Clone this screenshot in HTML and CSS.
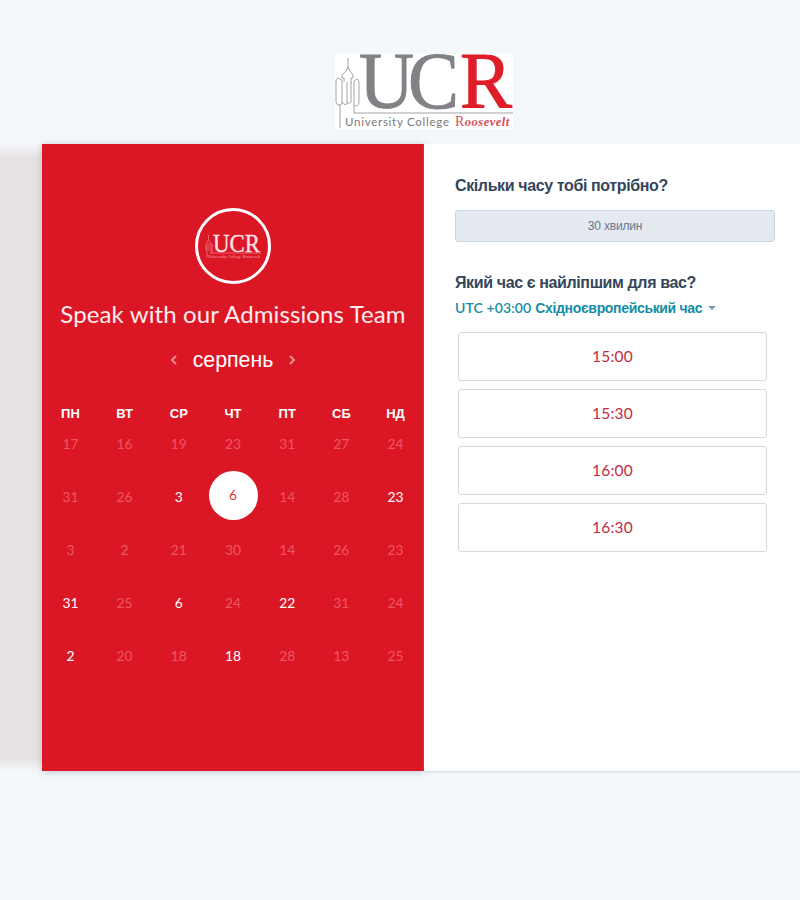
FILE: index.html
```html
<!DOCTYPE html>
<html lang="uk">
<head>
<meta charset="utf-8">
<title>University College Roosevelt</title>
<link rel="stylesheet" href="styles.css">
</head>
<body>
<header class="brand">
<svg class="logo" viewBox="0 0 178 75" role="img" aria-label="University College Roosevelt">
<rect width="178" height="75" fill="#fff"/>
<g class="tower"><path d="M13 4v9M13 13q-1 4-6 8v3h2v4M13 13q1 4 5 8v3h-2v5M19 27v32h159M5 51v23"/><path d="M5 25q-3-2-4 1v22q1 4 4 3q2 0 2-3V28q0-3-2-3zM7 48q3 4 5 2V28M12 48q3 3 4 0V28M19 27q4-4 5 1v20q-1 6-5 3"/></g>
<g class="letters"><text x="24" y="54" textLength="55" lengthAdjust="spacingAndGlyphs">U</text><text x="73" y="54" textLength="51" lengthAdjust="spacingAndGlyphs">C</text><text class="roman" x="125" y="54" textLength="52" lengthAdjust="spacingAndGlyphs">R</text></g>
<text class="college" x="10" y="72" textLength="104">University College</text>
<text class="roosevelt" x="120" y="72"><tspan class="initial">R</tspan>oosevelt</text>
</svg>
</header>
<main class="scheduler">
<div class="gutter"></div>
<section class="calendar">
<div class="avatar">
<svg viewBox="0 0 56 25" role="img" aria-label="UCR">
<path class="mini-tower" d="M3.500 1v5L2 8v12M3.500 6L6 9v11M1 10v7M4 9v8M7 10v9h49M2 20v4"/>
<text class="mini" x="8" y="18" textLength="47" lengthAdjust="spacingAndGlyphs">UCR</text>
<text class="mini-name" x="3" y="23.500" textLength="52" lengthAdjust="spacingAndGlyphs">University College Roosevelt</text>
</svg>
</div>
<h1>Speak with our Admissions Team</h1>
<div class="month">
<svg class="arrow" viewBox="0 0 8 10"><path d="M6 1L2 5l4 4"/></svg>
<span>серпень</span>
<svg class="arrow" viewBox="0 0 8 10"><path d="M2 1l4 4-4 4"/></svg>
</div>
<div class="week names"><span>ПН</span><span>ВТ</span><span>СР</span><span>ЧТ</span><span>ПТ</span><span>СБ</span><span>НД</span></div>
<div class="week"><span>17</span><span>16</span><span>19</span><span>23</span><span>31</span><span>27</span><span>24</span></div>
<div class="week"><span>31</span><span>26</span><span class="open">3</span><span class="selected">6</span><span>14</span><span>28</span><span class="open">23</span></div>
<div class="week"><span>3</span><span>2</span><span>21</span><span>30</span><span>14</span><span>26</span><span>23</span></div>
<div class="week"><span class="open">31</span><span>25</span><span class="open">6</span><span>24</span><span class="open">22</span><span>31</span><span>24</span></div>
<div class="week"><span class="open">2</span><span>20</span><span>18</span><span class="open">18</span><span>28</span><span>13</span><span>25</span></div>
</section>
<section class="booking">
<h2>Скільки часу тобі потрібно?</h2>
<div class="duration">30 хвилин</div>
<h2>Який час є найліпшим для вас?</h2>
<div class="zone"><span class="offset">UTC +03:00</span><span class="place">Східноєвропейський час</span><i class="caret"></i></div>
<div class="slots"><div class="slot">15:00</div><div class="slot">15:30</div><div class="slot">16:00</div><div class="slot">16:30</div></div>
</section>
</main>
</body>
</html>
```
FILE: styles.css
```css
* { box-sizing: border-box; }
body { margin: 0; height: 900px; overflow: hidden; background: #f4f8fb; font-family: "Liberation Sans", sans-serif; }
.brand { height: 144px; padding: 54px 0 0 335px; }
.logo { display: block; width: 178px; height: 75px; overflow: visible; }
.tower { fill: none; stroke: #99999c; stroke-width: .9; }
.letters { font: 81px "Liberation Serif", serif; fill: #808286; stroke: #808286; stroke-width: .9; }
.letters .roman { fill: #df1d29; stroke: #df1d29; stroke-width: 1; }
.college { font: 11.500px Lato, sans-serif; fill: #77777b; }
.roosevelt { font: italic bold 12.500px "Liberation Serif", serif; letter-spacing: .5px; fill: #d94c57; }
.initial { font-style: normal; font-weight: normal; font-size: 14px; }
.scheduler { display: flex; height: 627px; }
.gutter { width: 42px; background: linear-gradient(#f4f8fb, #e6e2e2 14px, #e6e2e2 615px, #f4f8fb); }
.calendar { width: 382px; background: #dc1725; box-shadow: 0 1px 7px #8b95a180; color: #fff; padding-top: 64px; font-family: Lato, sans-serif; }
.avatar { width: 76px; height: 76px; margin: 0 auto; border: 3px solid #fff; border-radius: 50%; display: flex; align-items: center; justify-content: center; }
.avatar svg { width: 56px; height: 25px; overflow: visible; }
.mini-tower { fill: none; stroke: #f4929a; stroke-width: .6; }
.mini { font: 26px "Liberation Serif", serif; fill: #ffe5e7; stroke: #ffe5e7; stroke-width: .3; }
.mini-name { font: 4.500px "Liberation Serif", serif; fill: #f5a5aa; }
h1 { margin: 12px 0 0; font-size: 24px; font-weight: 400; line-height: 36px; letter-spacing: .12px; text-align: center; white-space: nowrap; color: #ffecee; }
.month { display: flex; justify-content: center; align-items: center; gap: 15px; height: 28px; margin-top: 14px; font: 21.300px "Liberation Sans", sans-serif; }
.arrow { width: 8px; height: 10px; fill: none; stroke: #f18d94; stroke-width: 2; }
.week { display: grid; grid-template-columns: repeat(7, 54.200px); justify-content: center; align-items: center; justify-items: center; height: 53px; font-size: 13.800px; letter-spacing: 0; color: #ec5661; }
.names { height: 30px; margin-top: 24px; font: bold 13px "Liberation Sans", sans-serif; color: #fff; }
.names + .week { height: 32px; margin-bottom: 11px; margin-top: -1px; }
.week .open { color: #fff; }
.selected { width: 49px; height: 49px; line-height: 48px; margin-top: -2px; border-radius: 50%; background: #fff; color: #dc3945; text-align: center; }
.booking { width: 376px; background: #fff; padding: 31px 25px 0 31px; box-shadow: 0 1px 2px #a9b3bf80; }
h2 { margin: 0; font-size: 16px; line-height: 22px; letter-spacing: -.38px; color: #34455a; white-space: nowrap; }
.duration { height: 32px; margin: 13px 0 30px; border: 1px solid #cbd6e2; border-radius: 3px; background: #e5eaf0; color: #65788f; font-size: 12px; letter-spacing: -.2px; line-height: 30px; text-align: center; }
.zone { display: flex; align-items: center; height: 20px; margin-top: 4px; color: #168da4; white-space: nowrap; font-size: 14px; font-weight: bold; letter-spacing: -.33px; }
.offset { font: 600 14px Lato, sans-serif; letter-spacing: .1px; margin: -1px 4px 0 0; }
.caret { border: 4px solid transparent; border-top-color: #7c98b6; border-bottom: 0; margin-left: 6px; }
.slots { display: flex; flex-direction: column; gap: 8px; margin: 14px 8px 0 3px; }
.slot { height: 49px; border: 1px solid #d3d8df; border-radius: 3px; color: #c22d40; font: 15.500px/46px Lato, sans-serif; letter-spacing: .2px; text-align: center; }
```
